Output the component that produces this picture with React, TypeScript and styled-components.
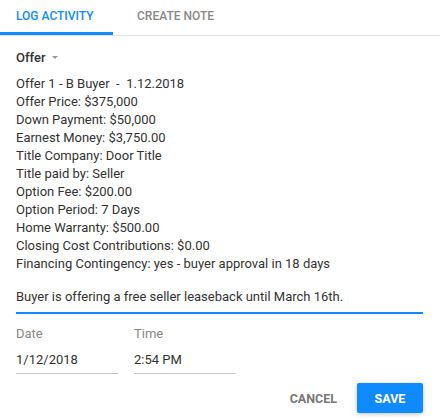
import React from "react";
import styled, { createGlobalStyle } from "styled-components";

const GlobalStyle = createGlobalStyle`
  body {
    margin: 0;
    background: #ffffff;
    font-family: Roboto, "Liberation Sans", sans-serif;
  }
`;

const details = [
  "Offer 1 - B Buyer  -  1.12.2018",
  "Offer Price: $375,000",
  "Down Payment: $50,000",
  "Earnest Money: $3,750.00",
  "Title Company: Door Title",
  "Title paid by: Seller",
  "Option Fee: $200.00",
  "Option Period: 7 Days",
  "Home Warranty: $500.00",
  "Closing Cost Contributions: $0.00",
  "Financing Contingency: yes - buyer approval in 18 days",
];

const App = () => {
  return (
    <Container>
      <GlobalStyle />
      <Tabs>
        <Tab active>LOG ACTIVITY</Tab>
        <Tab>CREATE NOTE</Tab>
      </Tabs>
      <Body>
        <Select>
          Offer
          <Caret />
        </Select>
        <Details>
          {details.map((line) => (
            <Line key={line}>{line}</Line>
          ))}
        </Details>
        <Note>Buyer is offering a free seller leaseback until March 16th.</Note>
        <Fields>
          <Field>
            <Label>Date</Label>
            <Value>1/12/2018</Value>
          </Field>
          <Field>
            <Label>Time</Label>
            <Value>2:54 PM</Value>
          </Field>
        </Fields>
        <Actions>
          <Button>CANCEL</Button>
          <Button primary>SAVE</Button>
        </Actions>
      </Body>
    </Container>
  );
};

export default App;

const Container = styled.div`
  width: 440px;
  height: 420px;
  background: #fff;
  color: #333;
`;

const Tabs = styled.div`
  display: flex;
  height: 36px;
  border-bottom: 1px solid #e3e3e3;
  box-sizing: border-box;
`;

const Tab = styled.div<{ active?: boolean }>`
  height: 35px;
  box-sizing: border-box;
  padding: 0 ${(p) => (p.active ? "0 0 16px" : "24px")};
  width: ${(p) => (p.active ? "113px" : "auto")};
  display: flex;
  align-items: center;
  white-space: nowrap;
  font-size: 12px;
  font-weight: 500;
  color: ${(p) => (p.active ? "#0f8bff" : "#888")};
  border-bottom: 3px solid ${(p) => (p.active ? "#0f8bff" : "transparent")};
`;

const Body = styled.div`
  padding: 0 17px 0 16px;
`;

const Select = styled.div`
  display: flex;
  align-items: center;
  height: 20px;
  margin-top: 11px;
  font-size: 13px;
  font-weight: 500;
  color: #333;
`;

const Caret = styled.span`
  width: 0;
  height: 0;
  margin-left: 6px;
  margin-top: 1px;
  border-left: 3px solid transparent;
  border-right: 3px solid transparent;
  border-top: 3px solid #999;
`;

const Details = styled.div`
  margin-top: 8px;
`;

const Line = styled.div`
  font-size: 13px;
  line-height: 18px;
  color: #333;
  white-space: pre;
`;

const Note = styled.div`
  margin-top: 15px;
  font-size: 13px;
  line-height: 18px;
  padding-bottom: 6px;
  border-bottom: 2px solid #0f8bff;
`;

const Fields = styled.div`
  display: flex;
  gap: 16px;
  margin-top: 11px;
`;

const Field = styled.div`
  width: 102px;
  border-bottom: 1px solid #c8c8c8;
`;

const Label = styled.div`
  font-size: 13px;
  line-height: 18px;
  color: #888;
`;

const Value = styled.div`
  font-size: 13px;
  line-height: 18px;
  color: #333;
  margin-top: 8px;
  padding-bottom: 4px;
`;

const Actions = styled.div`
  display: flex;
  justify-content: flex-end;
  align-items: center;
  gap: 4px;
  margin-top: 9px;
`;

const Button = styled.button<{ primary?: boolean }>`
  height: 30px;
  min-width: ${(p) => (p.primary ? "66px" : "auto")};
  padding: 0 16px;
  border: none;
  border-radius: 2px;
  font-family: Roboto, "Liberation Sans", sans-serif;
  font-size: 12.5px;
  font-weight: 700;
  color: ${(p) => (p.primary ? "#fff" : "#777")};
  background: ${(p) => (p.primary ? "#0f8bff" : "transparent")};
  box-shadow: ${(p) =>
    p.primary ? "0 1px 4px rgba(0,0,0,0.25)" : "none"};
`;
